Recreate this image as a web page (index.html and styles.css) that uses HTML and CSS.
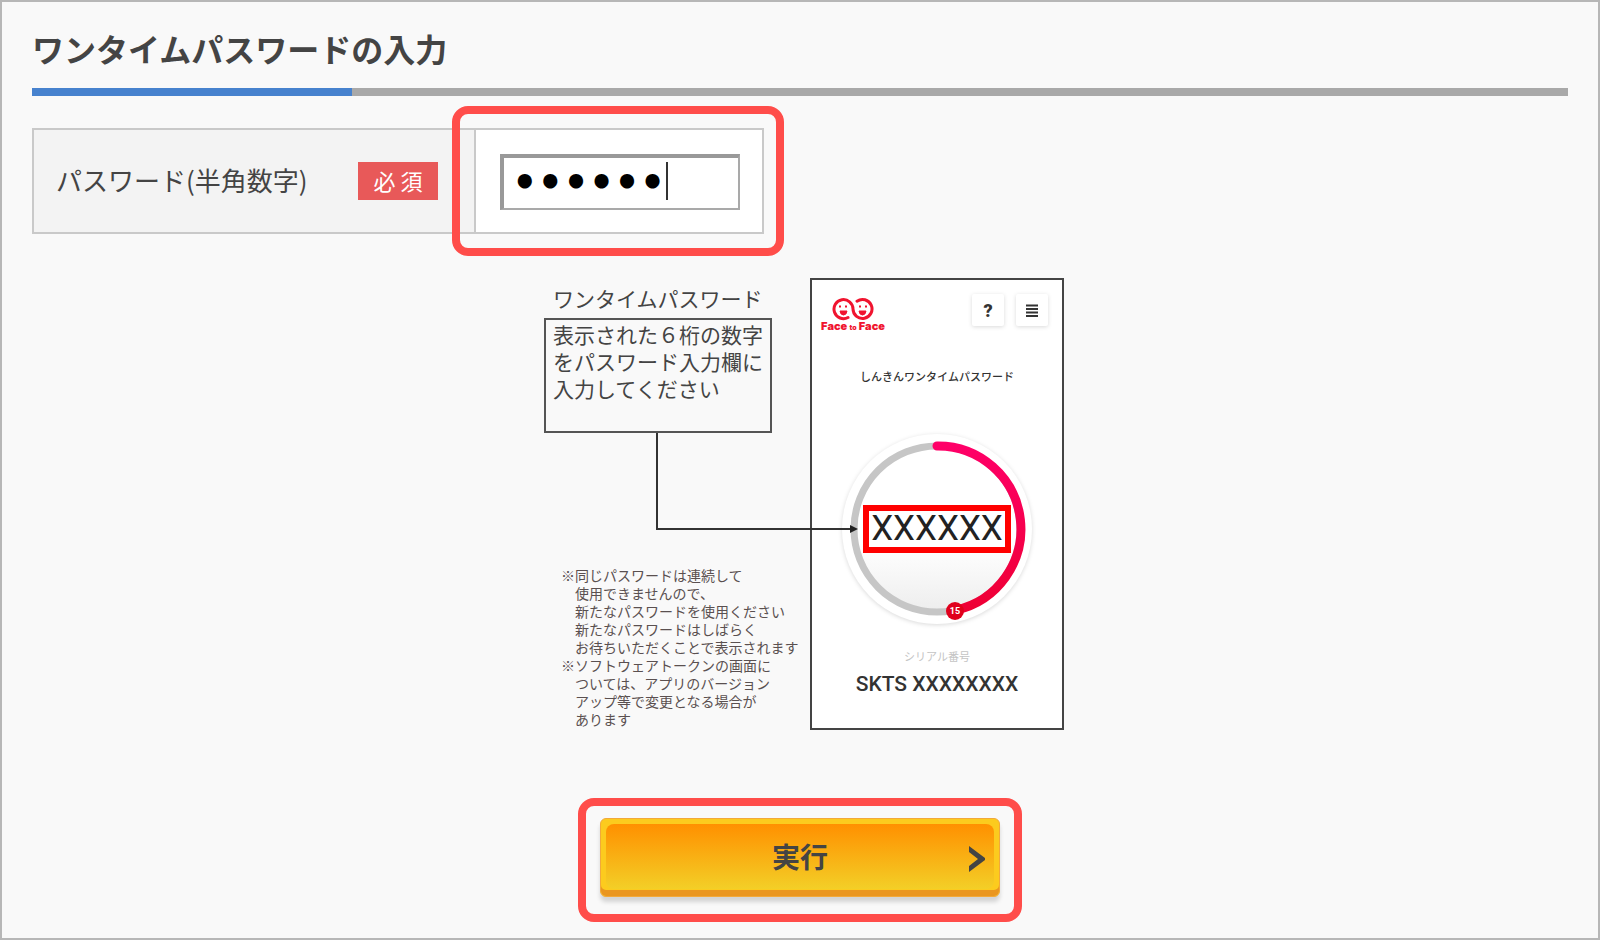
FILE: index.html
```html
<!DOCTYPE html>
<html lang="ja">
<head>
<meta charset="utf-8">
<meta name="viewport" content="width=device-width, initial-scale=1">
<title>ワンタイムパスワードの入力</title>
<link rel="stylesheet" href="styles.css">
</head>
<body>
<main class="page">
  <h1 class="title">ワンタイムパスワードの入力</h1>
  <div class="rule"></div>

  <form class="form">
    <div class="field">
      <div class="field-head">
        <label class="field-label" for="otp">パスワード(半角数字)</label>
        <span class="required">必 須</span>
      </div>
      <div class="field-body">
        <input class="field-input" id="otp" type="password" inputmode="numeric" maxlength="6" value="123456">
        <span class="caret"></span>
        <span class="field-highlight"></span>
      </div>
    </div>

    <section class="guide">
      <div class="guide-text">
        <h2 class="guide-title">ワンタイムパスワード</h2>
        <p class="callout">表示された６桁の数字<br>をパスワード入力欄に<br>入力してください</p>
        <ul class="notes">
          <li>同じパスワードは連続して<br>使用できませんので、<br>新たなパスワードを使用ください<br>新たなパスワードはしばらく<br>お待ちいただくことで表示されます</li>
          <li>ソフトウェアトークンの画面に<br>ついては、アプリのバージョン<br>アップ等で変更となる場合が<br>あります</li>
        </ul>
      </div>

      <div class="phone">
        <div class="phone-bar">
          <div class="logo">
            <svg width="44" height="24" viewBox="0 0 44 24" fill="none" stroke="#f0142f">
              <path stroke-width="3" stroke-linecap="round" d="M17 20.500A9.500 9.500 0 1 1 22 12A9.500 9.500 0 1 0 26 4.200"/>
              <path stroke-width="2" d="M8 9.500h2M14 9.500h2M28 9.500h2M34 9.500h2"/>
              <path fill="#f0142f" stroke-width="1" d="M9 14h7q-.5 4-3.500 4t-3.500-4zM28 14h7q-.5 4-3.500 4t-3.500-4z"/>
            </svg>
            <span class="logo-name">Face <small>to</small> Face</span>
          </div>
          <button class="tool" type="button" aria-label="ヘルプ">?</button>
          <button class="tool" type="button" aria-label="メニュー">
            <svg width="12" height="13" viewBox="0 0 12 13" stroke="#333" stroke-width="2"><path d="M0 1.500h12M0 5h12M0 8.500h12M0 12h12"/></svg>
          </button>
        </div>
        <p class="phone-title">しんきんワンタイムパスワード</p>
        <div class="dial">
          <svg class="dial-art" viewBox="0 0 200 200">
            <defs>
              <linearGradient id="face" x1="0" y1="0" x2="0" y2="1"><stop offset=".6" stop-color="#fff"/><stop offset="1" stop-color="#ededed"/></linearGradient>
              <linearGradient id="arc" x1="0" y1="0" x2="0" y2="1"><stop offset="0" stop-color="#ff0068"/><stop offset="1" stop-color="#ee0034"/></linearGradient>
            </defs>
            <circle class="dial-rim" cx="100" cy="100" r="95"/>
            <circle cx="100" cy="100" r="83" fill="url(#face)" stroke="#c6c6c6" stroke-width="7"/>
            <path d="M100 17A83 83 0 0 1 119 181" fill="none" stroke="url(#arc)" stroke-width="9" stroke-linecap="round"/>
            <circle cx="118" cy="182" r="9" fill="#e0001c"/>
            <text class="dial-count" x="118" y="185" text-anchor="middle">15</text>
          </svg>
          <span class="dial-code">XXXXXX</span>
        </div>
        <p class="serial-label">シリアル番号</p>
        <p class="serial">SKTS XXXXXXXX</p>
      </div>

      <svg class="connector" viewBox="0 0 204 102">
        <path d="M1 0V96H197" fill="none" stroke="#333" stroke-width="2"/>
        <path d="M194 92L202 96L194 100z" fill="#222"/>
      </svg>
    </section>

    <div class="submit-highlight">
      <button class="submit" type="submit">
        <span>実行</span>
        <svg class="submit-arrow" width="16" height="26" viewBox="0 0 16 26" fill="#444"><path d="M0 0L16 12V14L0 26V20L9 13L0 6z"/></svg>
      </button>
    </div>
  </form>
</main>
</body>
</html>
```
FILE: styles.css
```css
* {
  box-sizing: border-box;
}

body {
  margin: 0;
  background: #f9f9f9;
  color: #444;
  font-family: "Noto Sans CJK JP", sans-serif;
}

h1, h2, p, ul {
  margin: 0;
  padding: 0;
}

.page {
  min-height: 100vh;
  padding: 26px 30px 14px;
  border: 2px solid #b7b7b7;
}

.title {
  padding-bottom: 20px;
  font-size: 32px;
  line-height: 40px;
  font-weight: 700;
}

.rule {
  height: 8px;
  background: linear-gradient(to right, #4782ce 320px, #a9a9a9 320px);
}

.form {
  display: flex;
  flex-direction: column;
  align-items: center;
}

/* Password row */
.field {
  display: flex;
  align-self: flex-start;
  margin-top: 32px;
}

.field-head {
  display: flex;
  align-items: center;
  justify-content: space-between;
  width: 444px;
  padding: 0 36px 0 22px;
  border: 2px solid #c9c9c9;
  background: #f3f3f3;
}

.field-label {
  padding-bottom: 2px;
  font-size: 26px;
  line-height: 38px;
}

.required {
  width: 80px;
  height: 38px;
  background: #e85959;
  color: #fff;
  font-size: 22px;
  line-height: 36px;
  text-align: center;
}

.field-body {
  position: relative;
  padding: 24px 22px 22px 24px;
  border: 2px solid #c9c9c9;
  border-left: 0;
  background: #fff;
}

.field-input {
  display: block;
  width: 240px;
  height: 56px;
  padding: 0 8px 2px;
  border: 2px solid #a9a9a9;
  border-top: 4px solid #999;
  border-left: 4px solid #999;
  border-radius: 0;
  outline: 0;
  background: #fff;
  color: #000;
  caret-color: transparent;
  font-family: "DejaVu Sans", sans-serif;
  font-size: 40px;
  font-weight: 700;
}

.caret {
  position: absolute;
  top: 32px;
  left: 190px;
  width: 2px;
  height: 38px;
  background: #333;
}

.field-highlight {
  position: absolute;
  inset: -24px -22px -24px -24px;
  border: 8px solid #ff4d4a;
  border-radius: 16px;
  pointer-events: none;
}

/* Illustrated guide */
.guide {
  position: relative;
  display: flex;
  margin: 44px 0 68px 8px;
}

.guide-text {
  width: 266px;
}

.guide-title {
  padding: 6px 0 6px 9px;
  font-size: 21px;
  line-height: 28px;
  font-weight: 400;
}

.callout {
  width: 228px;
  height: 115px;
  padding: 1px 0 0 7px;
  border: 2px solid #555;
  font-size: 21px;
  line-height: 27px;
  white-space: nowrap;
}

.notes {
  margin-top: 133px;
  padding-left: 31px;
  color: #5a5050;
  font-size: 14px;
  line-height: 18px;
  list-style: none;
  white-space: nowrap;
}

.notes li {
  text-indent: -14px;
}

.notes li::before {
  content: "※";
}

.connector {
  position: absolute;
  top: 155px;
  left: 112px;
  width: 204px;
  height: 102px;
}

.phone {
  display: flex;
  flex-direction: column;
  align-items: center;
  width: 254px;
  height: 452px;
  border: 2px solid #444;
  background: #fff;
}

.phone-bar {
  display: flex;
  align-self: stretch;
  gap: 12px;
  padding: 14px 14px 0 10px;
}

.logo {
  display: flex;
  flex-direction: column;
  align-items: center;
  width: 62px;
  margin-right: auto;
  padding-top: 3px;
}

.logo-name {
  color: #f0142f;
  font-family: Inter, sans-serif;
  font-size: 11px;
  line-height: 10px;
  font-weight: 900;
  white-space: nowrap;
}

.logo-name small {
  font-size: 7px;
}

.tool {
  display: grid;
  place-items: center;
  width: 32px;
  height: 32px;
  padding: 0;
  border: 0;
  border-radius: 2px;
  background: #fff;
  box-shadow: 0 1px 4px rgba(0, 0, 0, 0.15);
  color: #333;
  font-family: Roboto, sans-serif;
  font-size: 18px;
  font-weight: 900;
}

.phone-title {
  margin-top: 34px;
  color: #333;
  font-size: 11px;
  line-height: 18px;
  font-weight: 500;
}

.dial {
  display: grid;
  place-items: center;
  margin-top: 44px;
}

.dial-art,
.dial-code {
  grid-area: 1 / 1;
}

.dial-art {
  width: 200px;
  height: 200px;
}

.dial-rim {
  fill: #fff;
  filter: drop-shadow(0 1px 2px rgba(0, 0, 0, 0.15));
}

.dial-count {
  fill: #fff;
  font-family: Roboto, sans-serif;
  font-size: 9px;
  font-weight: 700;
}

.dial-code {
  width: 148px;
  border: 6px solid #f00;
  background: #fff;
  color: #222;
  font-family: Roboto, sans-serif;
  font-size: 35px;
  line-height: 36px;
  text-align: center;
  z-index: 1;
}

.serial-label {
  margin-top: 18px;
  color: #c4c4c4;
  font-size: 11px;
  line-height: 18px;
}

.serial {
  margin-top: 6px;
  color: #333;
  font-family: Roboto, sans-serif;
  font-size: 21px;
  line-height: 26px;
  font-weight: 500;
}

/* Submit */
.submit-highlight {
  padding: 12px 14px 17px;
  border: 8px solid #ff4d4a;
  border-radius: 16px;
}

.submit {
  position: relative;
  isolation: isolate;
  display: block;
  width: 400px;
  height: 79px;
  padding: 0 0 4px;
  border: 1px solid #f2a93a;
  border-radius: 6px;
  background: #fccb1e;
  box-shadow: inset 0 -6px 0 #ea9620, 0 5px 4px rgba(0, 0, 0, 0.15);
  color: #444;
  font-family: inherit;
  font-size: 28px;
  font-weight: 700;
}

.submit::before {
  content: "";
  position: absolute;
  inset: 5px 5px 7px;
  z-index: -1;
  border-radius: 8px;
  background: linear-gradient(to bottom, #ff9000, #f3cf27);
}

.submit-arrow {
  position: absolute;
  top: 27px;
  right: 14px;
}
```
